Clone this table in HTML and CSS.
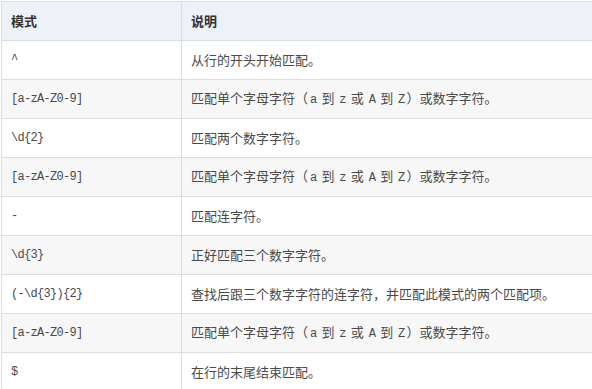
FILE: index.html
```html
<!DOCTYPE html>
<html lang="zh">
<head>
<meta charset="utf-8">
<link rel="stylesheet" href="styles.css">
</head>
<body>
<div class="wrap">
<table class="regex">
  <thead>
    <tr><th class="c1">模式</th><th>说明</th></tr>
  </thead>
  <tbody>
    <tr><td class="code">^</td><td>从行的开头开始匹配。</td></tr>
    <tr><td class="code">[a-zA-Z0-9]</td><td>匹配单个字母字符（<code>a</code> 到 <code>z</code> 或 <code>A</code> 到 <code>Z</code>）或数字字符。</td></tr>
    <tr><td class="code">\d{2}</td><td>匹配两个数字字符。</td></tr>
    <tr><td class="code">[a-zA-Z0-9]</td><td>匹配单个字母字符（<code>a</code> 到 <code>z</code> 或 <code>A</code> 到 <code>Z</code>）或数字字符。</td></tr>
    <tr><td class="code">-</td><td>匹配连字符。</td></tr>
    <tr><td class="code">\d{3}</td><td>正好匹配三个数字字符。</td></tr>
    <tr><td class="code">(-\d{3}){2}</td><td>查找后跟三个数字字符的连字符，并匹配此模式的两个匹配项。</td></tr>
    <tr><td class="code">[a-zA-Z0-9]</td><td>匹配单个字母字符（<code>a</code> 到 <code>z</code> 或 <code>A</code> 到 <code>Z</code>）或数字字符。</td></tr>
    <tr><td class="code">$</td><td>在行的末尾结束匹配。</td></tr>
  </tbody>
</table>
</div>
</body>
</html>
```

FILE: styles.css
```css
html, body {
  margin: 0;
  padding: 0;
  background: #ffffff;
  overflow: hidden;
}

.wrap {
  padding: 1px 0 0 1px;
  width: 620px;
}

.regex {
  border-collapse: collapse;
  width: 620px;
  font-family: "Noto Sans CJK SC", "Noto Sans", sans-serif;
  font-size: 13px;
  color: #4a4a4a;
}

.regex th,
.regex td {
  border: 1px solid #dddddd;
  height: 39px;
  padding: 0 9px;
  text-align: left;
  vertical-align: middle;
  box-sizing: border-box;
  line-height: 18px;
  white-space: nowrap;
}

.regex th {
  background: #eef1f5;
  color: #333333;
  font-weight: bold;
}

.regex .c1 {
  width: 180px;
}

.regex tbody tr:nth-child(even) td {
  background: #f7f7f7;
}

.regex td.code,
.regex code {
  font-family: "Liberation Mono", "DejaVu Sans Mono", monospace;
  font-size: 12px;
  letter-spacing: -0.7px;
  color: #4a4a4a;
}

.regex code {
  padding: 0 2px;
}
```
